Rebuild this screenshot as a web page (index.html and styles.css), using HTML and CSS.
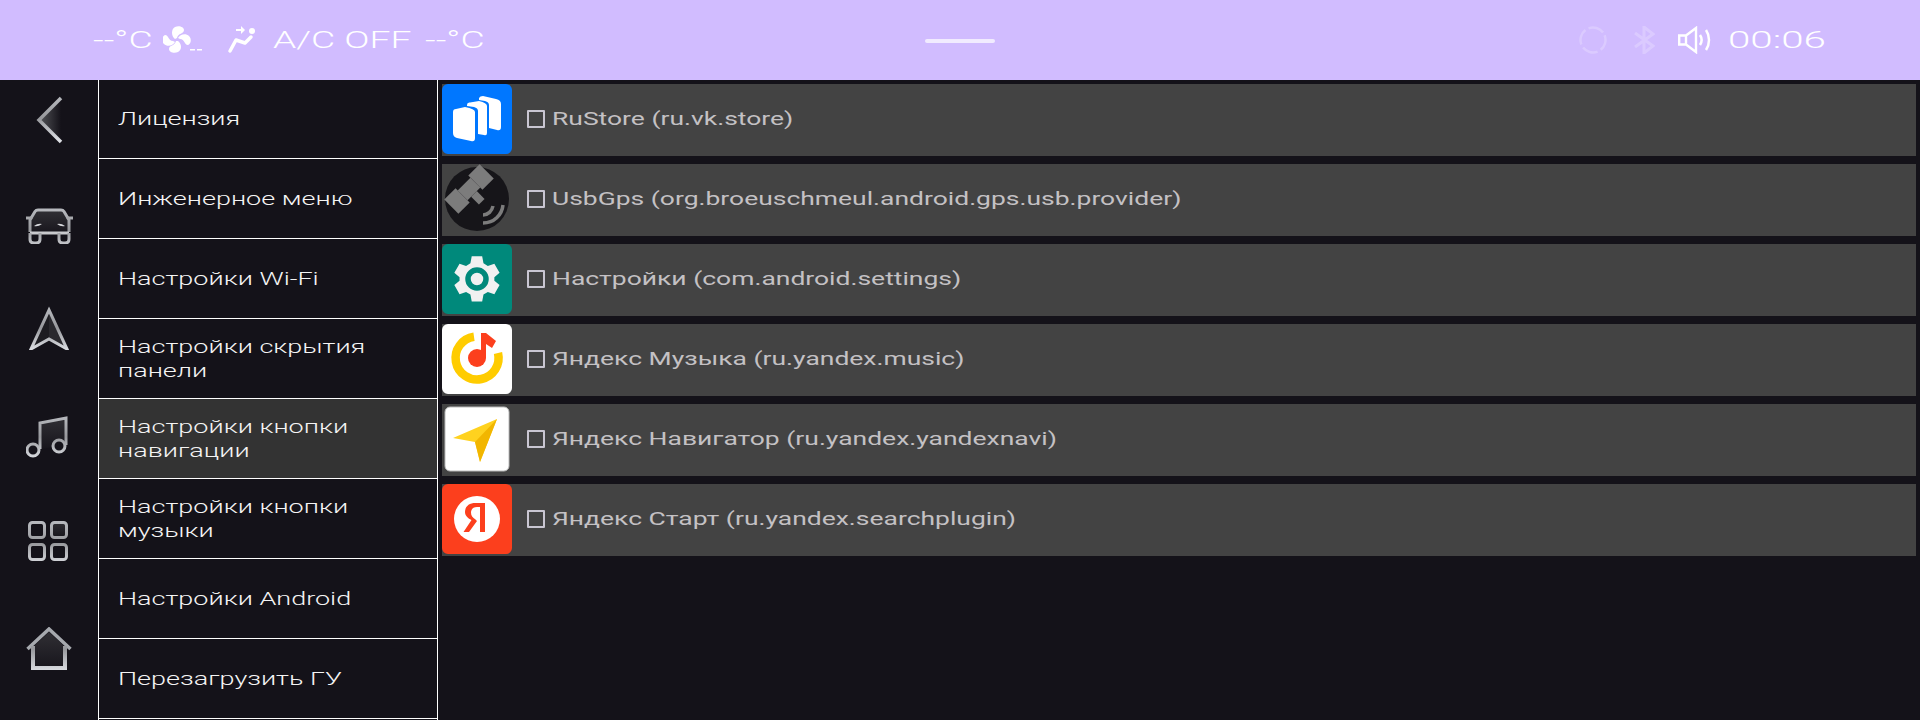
FILE: index.html
```html
<!DOCTYPE html>
<html lang="ru">

<head>
    <meta charset="UTF-8">
    <title>Настройки</title>
    <link rel="stylesheet" href="styles.css">
</head>

<body>
    <svg class="defs" width="0" height="0">
        <defs>
            <linearGradient id="silverUser" gradientUnits="userSpaceOnUse" x1="0" y1="0" x2="0" y2="44">
                <stop offset="0" stop-color="#b9bbc0" />
                <stop offset="0.5" stop-color="#97989c" />
                <stop offset="1" stop-color="#dcdee3" />
            </linearGradient>
            <linearGradient id="inner" x1="0" y1="0" x2="0" y2="1">
                <stop offset="0" stop-color="#302f34" />
                <stop offset="1" stop-color="#17151c" />
            </linearGradient>
            <linearGradient id="fade" x1="0" y1="0" x2="1" y2="0">
                <stop offset="0" stop-color="#55565a" />
                <stop offset="1" stop-color="#141219" />
            </linearGradient>
        </defs>
    </svg>

    <!-- Status bar -->
    <header class="status-bar">
        <div class="status-left">
            <span class="status-text wide temp">--°C</span>
            <svg class="fan" viewBox="0 0 40 28" width="40" height="28">
                <g fill="#fff">
                    <path d="M12 13C8 10 8 3 12 1c4-2 9 0 9 3 0 4-6 3-7 8z" />
                    <path d="M15 12c2-4 8-5 11-2 3 3 2 8-1 9-4 0-3-6-8-6z" />
                    <path d="M15 15c4 3 4 9 0 11-4 2-9 0-9-3 0-4 6-3 7-8z" />
                    <path d="M12 16c-2 4-8 5-11 2-3-3-2-8 1-9 4 0 3 6 8 6z" />
                    <rect x="27" y="23" width="5" height="1.500" />
                    <rect x="34" y="23" width="5" height="1.500" />
                </g>
            </svg>
            <svg class="seat" viewBox="0 0 30 30" width="30" height="30">
                <circle cx="25" cy="6" r="3" fill="#fff" />
                <path d="M3 26 9 15 18 18 24 12" fill="none" stroke="#fff" stroke-width="3.500" stroke-linecap="round" stroke-linejoin="round" />
                <path d="M9 5h7" fill="none" stroke="#fff" stroke-width="2" />
                <path d="M14 1l4 4-4 4z" fill="#fff" />
            </svg>
            <span class="status-text wide ac">A/C OFF</span>
            <span class="status-text wide temp2">--°C</span>
        </div>
        <div class="handle"></div>
        <div class="status-right">
            <svg class="gps" viewBox="0 0 28 28" width="28" height="28">
                <circle cx="14" cy="14" r="12.500" fill="none" stroke="#fff" stroke-opacity=".22" stroke-width="2.500" stroke-dasharray="16 3.600" transform="rotate(-22 14 14)" />
            </svg>
            <svg class="bt" viewBox="0 0 22 28" width="22" height="28">
                <path d="M2 7 20 20 11 27V1l9 7L2 21" fill="none" stroke="#fff" stroke-opacity=".22" stroke-width="3" />
            </svg>
            <svg class="volume" viewBox="0 0 34 28" width="34" height="28">
                <path d="M1.200 9.500H8L18 2V26L8 18.500H1.200z M8 9.500V18.500" fill="none" stroke="#fff" stroke-width="2.400" />
                <path d="M22 9c2 3 2 7 0 10" fill="none" stroke="#fff" stroke-width="2.500" />
                <path d="M28 4c4 6 4 14 0 20" fill="none" stroke="#fff" stroke-width="2.500" />
            </svg>
            <span class="status-text wide clock">00:06</span>
        </div>
    </header>

    <div class="screen">
        <!-- Icon rail -->
        <nav class="rail">
            <svg class="rail-icon rail-back" viewBox="0 0 30 48" width="30" height="48">
                <path d="M27 2 5 24l22 22z" fill="url(#fade)" />
                <path d="M27 2 5 24l22 22" fill="none" stroke="url(#silverUser)" stroke-width="3.500" />
            </svg>
            <svg class="rail-icon rail-car" viewBox="0 0 47 36" width="47" height="36">
                <path d="M5 12 10 3h27l5 9v14H5z" fill="url(#inner)" />
                <path d="M4 24V12L9 3.500Q10 2 12 2H35Q37 2 38 3.500L43 12V24" fill="none" stroke="url(#silverUser)" stroke-width="3" />
                <path d="M0 10h5M42 10h5" stroke="#a8a9ad" stroke-width="3" stroke-linecap="round" />
                <path d="M4 25H43" stroke="#c8c9cd" stroke-width="3" />
                <path d="M4 25v6q0 4 4 4h2q4 0 4-4v-6M33 25v6q0 4 4 4h2q4 0 4-4v-6" fill="none" stroke="url(#silverUser)" stroke-width="3" />
                <path d="M8 18q4-3 8-2-4 3-8 2zM39 18q-4-3-8-2 4 3 8 2z" fill="#d8d9dd" />
            </svg>
            <svg class="rail-icon rail-nav" viewBox="0 0 44 44" width="44" height="44">
                <path d="M22 4 22 33 4 43z" fill="#1d1c21" />
                <path d="M22 4 40 43 22 33z" fill="#2a292e" />
                <path d="M22 4 40 43 22 33 4 43z" fill="none" stroke="url(#silverUser)" stroke-width="3" />
            </svg>
            <svg class="rail-icon rail-music" viewBox="0 0 46 44" width="46" height="44">
                <path d="M14 34V8L40 3V30" fill="url(#inner)" stroke="url(#silverUser)" stroke-width="3" />
                <circle cx="7" cy="35" r="6" fill="#15131a" stroke="url(#silverUser)" stroke-width="3" />
                <circle cx="33" cy="31" r="6" fill="#15131a" stroke="url(#silverUser)" stroke-width="3" />
            </svg>
            <svg class="rail-icon rail-apps" viewBox="0 0 40 40" width="40" height="40">
                <rect x="1.500" y="1.500" width="15" height="15" rx="3" fill="none" stroke="url(#silverUser)" stroke-width="3" />
                <rect x="23.500" y="1.500" width="15" height="15" rx="3" fill="url(#inner)" stroke="url(#silverUser)" stroke-width="3" />
                <rect x="1.500" y="23.500" width="15" height="15" rx="3" fill="none" stroke="url(#silverUser)" stroke-width="3" />
                <rect x="23.500" y="23.500" width="15" height="15" rx="3" fill="none" stroke="url(#silverUser)" stroke-width="3" />
            </svg>
            <svg class="rail-icon rail-home" viewBox="0 0 46 44" width="46" height="44">
                <path d="M7 42V20L23 5 39 20V42z" fill="url(#inner)" />
                <path d="M1.500 22 23 2 44.500 22" fill="none" stroke="#a6a9ae" stroke-width="3.500" />
                <path d="M7 19V41H39V19" fill="none" stroke="url(#silverUser)" stroke-width="4" />
            </svg>
        </nav>

        <!-- Settings list -->
        <ul class="menu">
            <li class="menu-item"><span class="wide menu-label">Лицензия</span></li>
            <li class="menu-item"><span class="wide menu-label">Инженерное меню</span></li>
            <li class="menu-item"><span class="wide menu-label">Настройки Wi-Fi</span></li>
            <li class="menu-item"><span class="wide menu-label">Настройки скрытия<br>панели</span></li>
            <li class="menu-item active"><span class="wide menu-label">Настройки кнопки<br>навигации</span></li>
            <li class="menu-item"><span class="wide menu-label">Настройки кнопки<br>музыки</span></li>
            <li class="menu-item"><span class="wide menu-label">Настройки Android</span></li>
            <li class="menu-item"><span class="wide menu-label">Перезагрузить ГУ</span></li>
        </ul>

        <!-- Apps -->
        <main class="apps">
            <div class="app-row">
                <svg class="app-icon" viewBox="0 0 70 70" width="70" height="70">
                    <rect width="70" height="70" rx="6" fill="#0077ff" />
                    <g fill="#fff">
                        <path d="M11 28Q11 25 14 25L23 23Q33 25 33 28V54Q33 58 29 57L15 54Q11 53 11 49z" />
                        <path d="M25 21Q25 18 28 18.500L37 17Q45 19 45 22V49Q45 52 42 51L36 50V27Q36 24 32 23L25 22z" />
                        <path d="M37 14Q38 12 41 12L54 15Q59 16 59 20V43Q59 47 55 46L47 44V21Q47 18 43 17L37 16z" />
                    </g>
                </svg>
                <span class="check"></span>
                <span class="wide app-label">RuStore (ru.vk.store)</span>
            </div>
            <div class="app-row">
                <svg class="app-icon" viewBox="0 0 70 70" width="70" height="70">
                    <circle cx="35" cy="35" r="32" fill="#161519" />
                    <g fill="#7c7c7c" transform="rotate(-45 27 25)">
                        <rect x="2" y="15" width="16" height="20" />
                        <rect x="36" y="15" width="16" height="20" />
                        <rect x="18" y="18" width="18" height="14" />
                        <rect x="23" y="32" width="8" height="11" />
                    </g>
                    <path d="M41 51C46 51 50 47 51 42M41 59C52 59 60 51 61 41" fill="none" stroke="#7c7c7c" stroke-width="3.500" />
                </svg>
                <span class="check"></span>
                <span class="wide app-label">UsbGps (org.broeuschmeul.android.gps.usb.provider)</span>
            </div>
            <div class="app-row">
                <svg class="app-icon" viewBox="0 0 70 70" width="70" height="70">
                    <rect width="70" height="70" rx="6" fill="#00897b" />
                    <path transform="translate(4.500 4.500) scale(.87)" d="M29 9h12l1.500 8 5 3 7.500-2.500 6 10.500-6 5v4l6 5-6 10.500-7.500-2.500-5 3-1.500 8H29l-1.500-8-5-3-7.500 2.500-6-10.500 6-5v-4l-6-5 6-10.500 7.500 2.500 5-3z" fill="#f1f1f1" />
                    <circle cx="35" cy="35" r="9" fill="none" stroke="#00897b" stroke-width="5.500" />
                </svg>
                <span class="check"></span>
                <span class="wide app-label">Настройки (com.android.settings)</span>
            </div>
            <div class="app-row">
                <svg class="app-icon" viewBox="0 0 70 70" width="70" height="70">
                    <rect width="70" height="70" rx="6" fill="#fff" />
                    <path d="M32 12.700A21.500 21.500 0 1 0 56 29" fill="none" stroke="#ffcc00" stroke-width="8.500" />
                    <circle cx="35" cy="34" r="9" fill="#fc3f1d" />
                    <path d="M39 9H44L54 17 50 24 44 20V34H39z" fill="#fc3f1d" />
                </svg>
                <span class="check"></span>
                <span class="wide app-label">Яндекс Музыка (ru.yandex.music)</span>
            </div>
            <div class="app-row">
                <svg class="app-icon" viewBox="0 0 70 70" width="70" height="70">
                    <rect x="3" y="3" width="64" height="64" rx="5" fill="#fff" stroke="#bbb" stroke-width="1" />
                    <path d="M55 15 11 34 33 38 38 58z" fill="#ffd21f" />
                    <path d="M55 15 33 38 38 58z" fill="#f2b600" />
                </svg>
                <span class="check"></span>
                <span class="wide app-label">Яндекс Навигатор (ru.yandex.yandexnavi)</span>
            </div>
            <div class="app-row">
                <svg class="app-icon" viewBox="0 0 70 70" width="70" height="70">
                    <rect width="70" height="70" rx="6" fill="#fc3f1d" />
                    <circle cx="35" cy="35" r="23" fill="#fff" />
                    <path d="M38 48V23h-3c-4 0-6 2.500-6 5.500 0 3.500 1.500 5 4.500 7L35 37 27 48h-5.500L29.500 36c-4-2-6.500-4.500-6.500-8 0-5.500 4-9 10.500-9H43V48z" fill="#fc3f1d" />
                </svg>
                <span class="check"></span>
                <span class="wide app-label">Яндекс Старт (ru.yandex.searchplugin)</span>
            </div>
        </main>
    </div>
</body>

</html>
```

FILE: styles.css
```css
* {
    margin: 0;
    padding: 0;
    box-sizing: border-box;
}

html,
body {
    height: 720px;
    overflow: hidden;
}

body {
    background: #141219;
    font-family: 'Roboto', 'Liberation Sans', sans-serif;
    font-weight: 300;
}

.defs {
    position: absolute;
}

/* text is set narrow and stretched, the car font is very wide */
.wide {
    display: inline-block;
    white-space: nowrap;
    transform-origin: left center;
}

.status-bar {
    height: 80px;
    background: #d1bcff;
    display: flex;
    align-items: center;
    justify-content: space-between;
}

.status-left {
    display: flex;
    align-items: center;
    padding-left: 93px;
    width: 520px;
    height: 100%;
}

.status-text {
    color: #fff;
    font-size: 24px;
    transform: scaleX(1.55);
}

.temp {
    width: 70px;
}

.seat {
    margin-left: 24px;
}

.ac {
    margin-left: 16px;
    width: 152px;
}

.handle {
    width: 70px;
    height: 4px;
    margin-top: 2px;
    border-radius: 2px;
    background: #fff;
    opacity: .7;
}

.status-right {
    display: flex;
    align-items: center;
    justify-content: flex-end;
    width: 520px;
    padding-right: 94px;
}

.bt {
    margin-left: 26px;
}

.volume {
    margin-left: 23px;
}

.clock {
    width: 98px;
    margin-left: 16px;
    transform: scaleX(1.68);
}

.screen {
    display: flex;
    height: 640px;
}

.rail {
    width: 98px;
    flex: none;
    display: flex;
    flex-direction: column;
    align-items: center;
    padding-top: 16px;
}

.rail-car { margin-top: 64px; }
.rail-nav { margin-top: 62px; }
.rail-music { margin-top: 65px; }
.rail-apps { margin-top: 62px; margin-right: 2px; }
.rail-home { margin-top: 66px; }

.menu {
    width: 340px;
    flex: none;
    list-style: none;
    border-left: 1px solid #fff;
    border-right: 1px solid #fff;
}

.menu-item {
    height: 80px;
    border-bottom: 1px solid #fff;
    display: flex;
    align-items: center;
    padding-left: 19px;
}

.menu-item:first-child {
    height: 79px;
}

.menu-item.active {
    background: #333333;
}

.menu-label {
    color: #f4f4f4;
    font-size: 18px;
    line-height: 24px;
    transform: scaleX(1.5);
}

.apps {
    flex: 1;
    padding: 4px 4px 0 4px;
    display: flex;
    flex-direction: column;
    gap: 8px;
}

.app-row {
    height: 72px;
    background: #434343;
    display: flex;
    align-items: flex-start;
}

.app-icon {
    flex: none;
}

.check {
    width: 18px;
    height: 18px;
    border: 2px solid #c9c6d2;
    border-radius: 1px;
    margin: 26px 7px 0 15px;
    flex: none;
}

.app-label {
    color: #c4c1c4;
    font-size: 18px;
    font-weight: 400;
    line-height: 24px;
    margin-top: 23px;
    transform: scaleX(1.47);
}
```
